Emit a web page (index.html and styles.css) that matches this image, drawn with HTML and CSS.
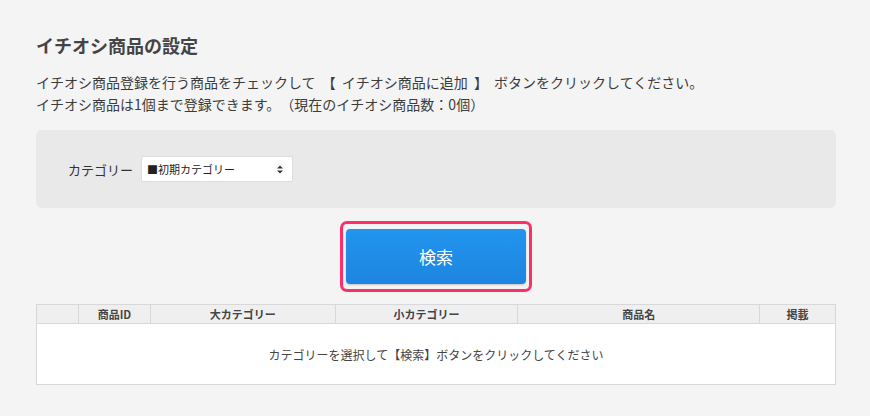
FILE: index.html
```html
<!DOCTYPE html>
<html lang="ja">
<head>
<meta charset="utf-8">
<link rel="stylesheet" href="styles.css">
</head>
<body>
<main class="page">
  <h1 class="title">イチオシ商品の設定</h1>
  <p class="desc">イチオシ商品登録を行う商品をチェックして 【 イチオシ商品に追加 】 ボタンをクリックしてください。<br>イチオシ商品は1個まで登録できます。（現在のイチオシ商品数：0個）</p>
  <section class="panel">
    <label class="field-label">カテゴリー</label>
    <div class="select">
      <span class="select-text">■初期カテゴリー</span>
      <svg class="select-arrow" width="8" height="11" viewBox="0 0 8 11"><path d="M1 4.5 L4 1.5 L7 4.5 Z M1 6.5 L4 9.5 L7 6.5 Z" fill="#333"/></svg>
    </div>
  </section>
  <div class="btn-wrap">
    <div class="btn-ring"><button class="btn">検索</button></div>
  </div>
  <table class="grid">
    <thead>
      <tr>
        <th class="c0"></th>
        <th class="c1">商品ID</th>
        <th class="c2">大カテゴリー</th>
        <th class="c3">小カテゴリー</th>
        <th class="c4">商品名</th>
        <th class="c5">掲載</th>
      </tr>
    </thead>
    <tbody>
      <tr><td colspan="6" class="empty">カテゴリーを選択して【検索】ボタンをクリックしてください</td></tr>
    </tbody>
  </table>
</main>
</body>
</html>
```
FILE: styles.css
```css
* { box-sizing: border-box; }
html, body { margin: 0; padding: 0; }
body {
  background: #f4f4f4;
  font-family: "Noto Sans CJK JP", "Noto Sans", sans-serif;
  color: #444;
  width: 870px;
  height: 416px;
  overflow: hidden;
  text-spacing-trim: space-all;
}
.page { padding: 34px 34px 0 36px; }
.title {
  margin: 0;
  font-size: 18px;
  font-weight: bold;
  line-height: 22px;
  color: #444;
}
.desc {
  margin: 15px 0 0;
  font-size: 14px;
  line-height: 22px;
  color: #3c3c3c;
  word-spacing: 3px;
}
.panel {
  margin-top: 15px;
  width: 800px;
  height: 78px;
  background: #e9e9e9;
  border-radius: 6px;
  display: flex;
  align-items: center;
  padding: 0 0 0 32px;
}
.field-label { font-size: 13px; color: #333; margin-right: 8px; }
.select {
  width: 152px;
  height: 26px;
  background: #fff;
  border-radius: 2px;
  border: 1px solid #ddd;
  display: flex;
  align-items: center;
  padding: 0 8px 0 5px;
  justify-content: space-between;
}
.select-text { font-size: 11px; color: #222; }
.btn-wrap { width: 800px; display: flex; justify-content: center; margin-top: 13px; }
.btn-ring {
  border: 3px solid #ff2d6a;
  border-radius: 7px;
  padding: 5px 3px 5px 3px;
}
.btn {
  display: block;
  width: 180px;
  height: 55px;
  border: none;
  border-radius: 4px;
  background: linear-gradient(#2295ef, #1d85df);
  color: #fff;
  font-family: "Noto Sans CJK JP", sans-serif;
  font-size: 17px;
  box-shadow: 0 1px 2px rgba(0,0,0,0.2);
}
.grid {
  margin-top: 12px;
  width: 800px;
  border-collapse: collapse;
  background: #fff;
  border: 1px solid #d8d8d8;
}
.grid th {
  background: #efefef;
  height: 19px;
  padding: 0;
  font-size: 11px;
  font-weight: bold;
  color: #444;
  border: 1px solid #d8d8d8;
  line-height: 17px;
}
.c0 { width: 42px; }
.c1 { width: 72px; }
.c2 { width: 185px; }
.c3 { width: 183px; }
.c4 { width: 242px; }
.c5 { width: 76px; }
.empty {
  height: 61px;
  text-align: center;
  font-size: 12px;
  color: #444;
  padding: 0;
}
```
